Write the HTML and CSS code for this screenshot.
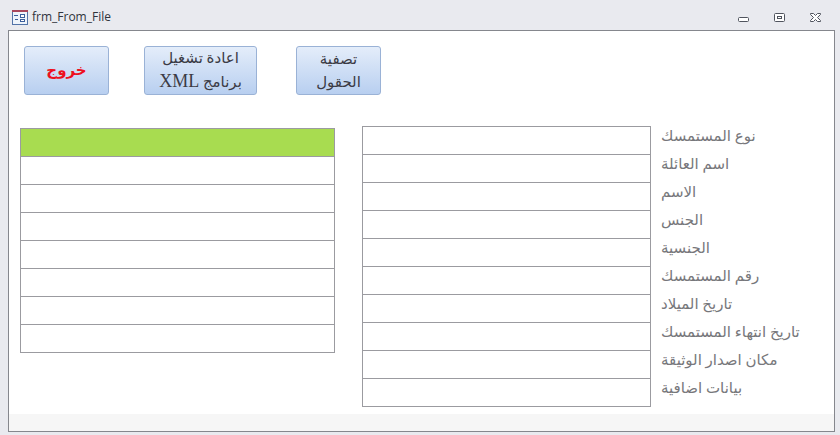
FILE: index.html
```html
<!DOCTYPE html>
<html lang="ar">
<head>
    <meta charset="UTF-8">
    <meta name="viewport" content="width=device-width, initial-scale=1.0">
    <title>frm_From_File</title>
    <link rel="stylesheet" href="styles.css">
</head>
<body>
    <div class="window">
        <header class="titlebar">
            <svg class="form-icon" width="16" height="15" viewBox="0 0 16 15" shape-rendering="crispEdges">
                <rect x="0.5" y="0.5" width="15" height="14" fill="#eef4fb" stroke="#5273a8"/>
                <rect width="16" height="2" fill="#a8475c"/>
                <path d="M2 5.5h4M3 9.5h3" stroke="#3c5f9c"/>
                <path d="M8.5 4.5h4v3h-4zM8.5 9.5h4v2h-4z" fill="#fff" stroke="#3c5f9c"/>
            </svg>
            <h1 class="title">frm_From_File</h1>
            <div class="controls">
                <button type="button" class="control" aria-label="Minimize">
                    <svg width="12" height="12" viewBox="0 0 12 12"><rect x="0.5" y="6.5" width="10" height="4" rx="1" fill="#fff" stroke="#50545e"/></svg>
                </button>
                <button type="button" class="control" aria-label="Restore">
                    <svg width="12" height="12" viewBox="0 0 12 12"><rect x="0.5" y="2.5" width="10" height="8" rx="1" fill="#fff" stroke="#50545e"/><rect x="3.5" y="5.5" width="4" height="2" fill="#fff" stroke="#50545e"/></svg>
                </button>
                <button type="button" class="control" aria-label="Close">
                    <svg width="12" height="12" viewBox="0 0 12 12"><path d="M0.5 2.5h3l2 2 2-2h3v1l-3 3 3 3v1h-3l-2-2-2 2h-3v-1l3-3-3-3z" fill="#fff" stroke="#50545e" stroke-linejoin="round"/></svg>
                </button>
            </div>
        </header>
        <main class="client">
            <div class="toolbar">
                <button type="button" class="btn btn-exit" dir="rtl">خروج</button>
                <button type="button" class="btn btn-wide" dir="rtl">اعادة تشغيل<br>برنامج <span class="latin">XML</span></button>
                <button type="button" class="btn" dir="rtl">تصفية<br>الحقول</button>
            </div>
            <form class="form">
                <div class="lines">
                    <input class="box active" type="text" aria-label="سطر 1">
                    <input class="box" type="text" aria-label="سطر 2">
                    <input class="box" type="text" aria-label="سطر 3">
                    <input class="box" type="text" aria-label="سطر 4">
                    <input class="box" type="text" aria-label="سطر 5">
                    <input class="box" type="text" aria-label="سطر 6">
                    <input class="box" type="text" aria-label="سطر 7">
                    <input class="box" type="text" aria-label="سطر 8">
                </div>
                <div class="fields">
                    <div class="field"><input class="box" type="text" id="doc-type"><label for="doc-type">نوع المستمسك</label></div>
                    <div class="field"><input class="box" type="text" id="family"><label for="family">اسم العائلة</label></div>
                    <div class="field"><input class="box" type="text" id="name"><label for="name">الاسم</label></div>
                    <div class="field"><input class="box" type="text" id="sex"><label for="sex">الجنس</label></div>
                    <div class="field"><input class="box" type="text" id="nationality"><label for="nationality">الجنسية</label></div>
                    <div class="field"><input class="box" type="text" id="doc-number"><label for="doc-number">رقم المستمسك</label></div>
                    <div class="field"><input class="box" type="text" id="birth"><label for="birth">تاريخ الميلاد</label></div>
                    <div class="field"><input class="box" type="text" id="expiry"><label for="expiry">تاريخ انتهاء المستمسك</label></div>
                    <div class="field"><input class="box" type="text" id="issue-place"><label for="issue-place">مكان اصدار الوثيقة</label></div>
                    <div class="field"><input class="box" type="text" id="extra"><label for="extra">بيانات اضافية</label></div>
                </div>
            </form>
            <footer class="statusbar"></footer>
        </main>
    </div>
</body>
</html>
```

FILE: styles.css
```css
* { box-sizing: border-box; }
body { margin: 0; background: #e9eaef; font-family: "Liberation Serif", "DejaVu Sans", serif; }

.window { min-height: 100vh; padding: 0 5px 3px 8px; display: flex; flex-direction: column; }

.titlebar { height: 30px; padding: 4px 13px 0 4px; display: flex; align-items: center; gap: 4px; }
.form-icon { flex: none; }
.title { flex: 1; margin: 0; font: 12px/16px "Open Sans", "Noto Sans", sans-serif; color: #30343c; }
.controls { display: flex; gap: 24px; }
.control { padding: 0; border: 0; background: none; display: flex; }

.client { flex: 1; display: flex; flex-direction: column; background: #fff; border: 1px solid #85878d; }

.toolbar { display: grid; grid-template-columns: 120px 152px 85px; padding: 15px 15px 0; }
.btn {
    width: 85px;
    height: 49px;
    padding: 0;
    border: 1px solid #9ab2d6;
    border-radius: 3px;
    background: linear-gradient(#e4edfa, #b8cff0);
    color: #3b3b45;
    font-family: inherit;
    font-size: 15px;
    line-height: 23px;
}
.btn-wide { width: 113px; }
.btn-exit { color: #ed1020; font-weight: bold; }
.latin { font-size: 18px; }

.form { display: grid; grid-template-columns: 315fr 472fr; gap: 27px; align-items: start; padding: 31px 0 7px 11px; }
.lines { margin-top: 2px; }
.box { display: block; width: 100%; height: 28px; padding: 0 4px; border: 1px solid #9b9ba0; border-bottom: 0; border-radius: 0; background: #fff; font: inherit; outline: 0; }
.box.active { background: #a8dc50; }
.lines .box:last-child, .field:last-child .box { height: 29px; border-bottom: 1px solid #9b9ba0; }
.field { display: grid; grid-template-columns: 289fr 173fr; gap: 10px; align-items: start; }
.field label { font-size: 15px; line-height: 20px; color: #77777b; white-space: nowrap; }
.field:last-child { grid-auto-rows: 29px; }

.statusbar { flex: 1; background: #f6f6f6; }
```
